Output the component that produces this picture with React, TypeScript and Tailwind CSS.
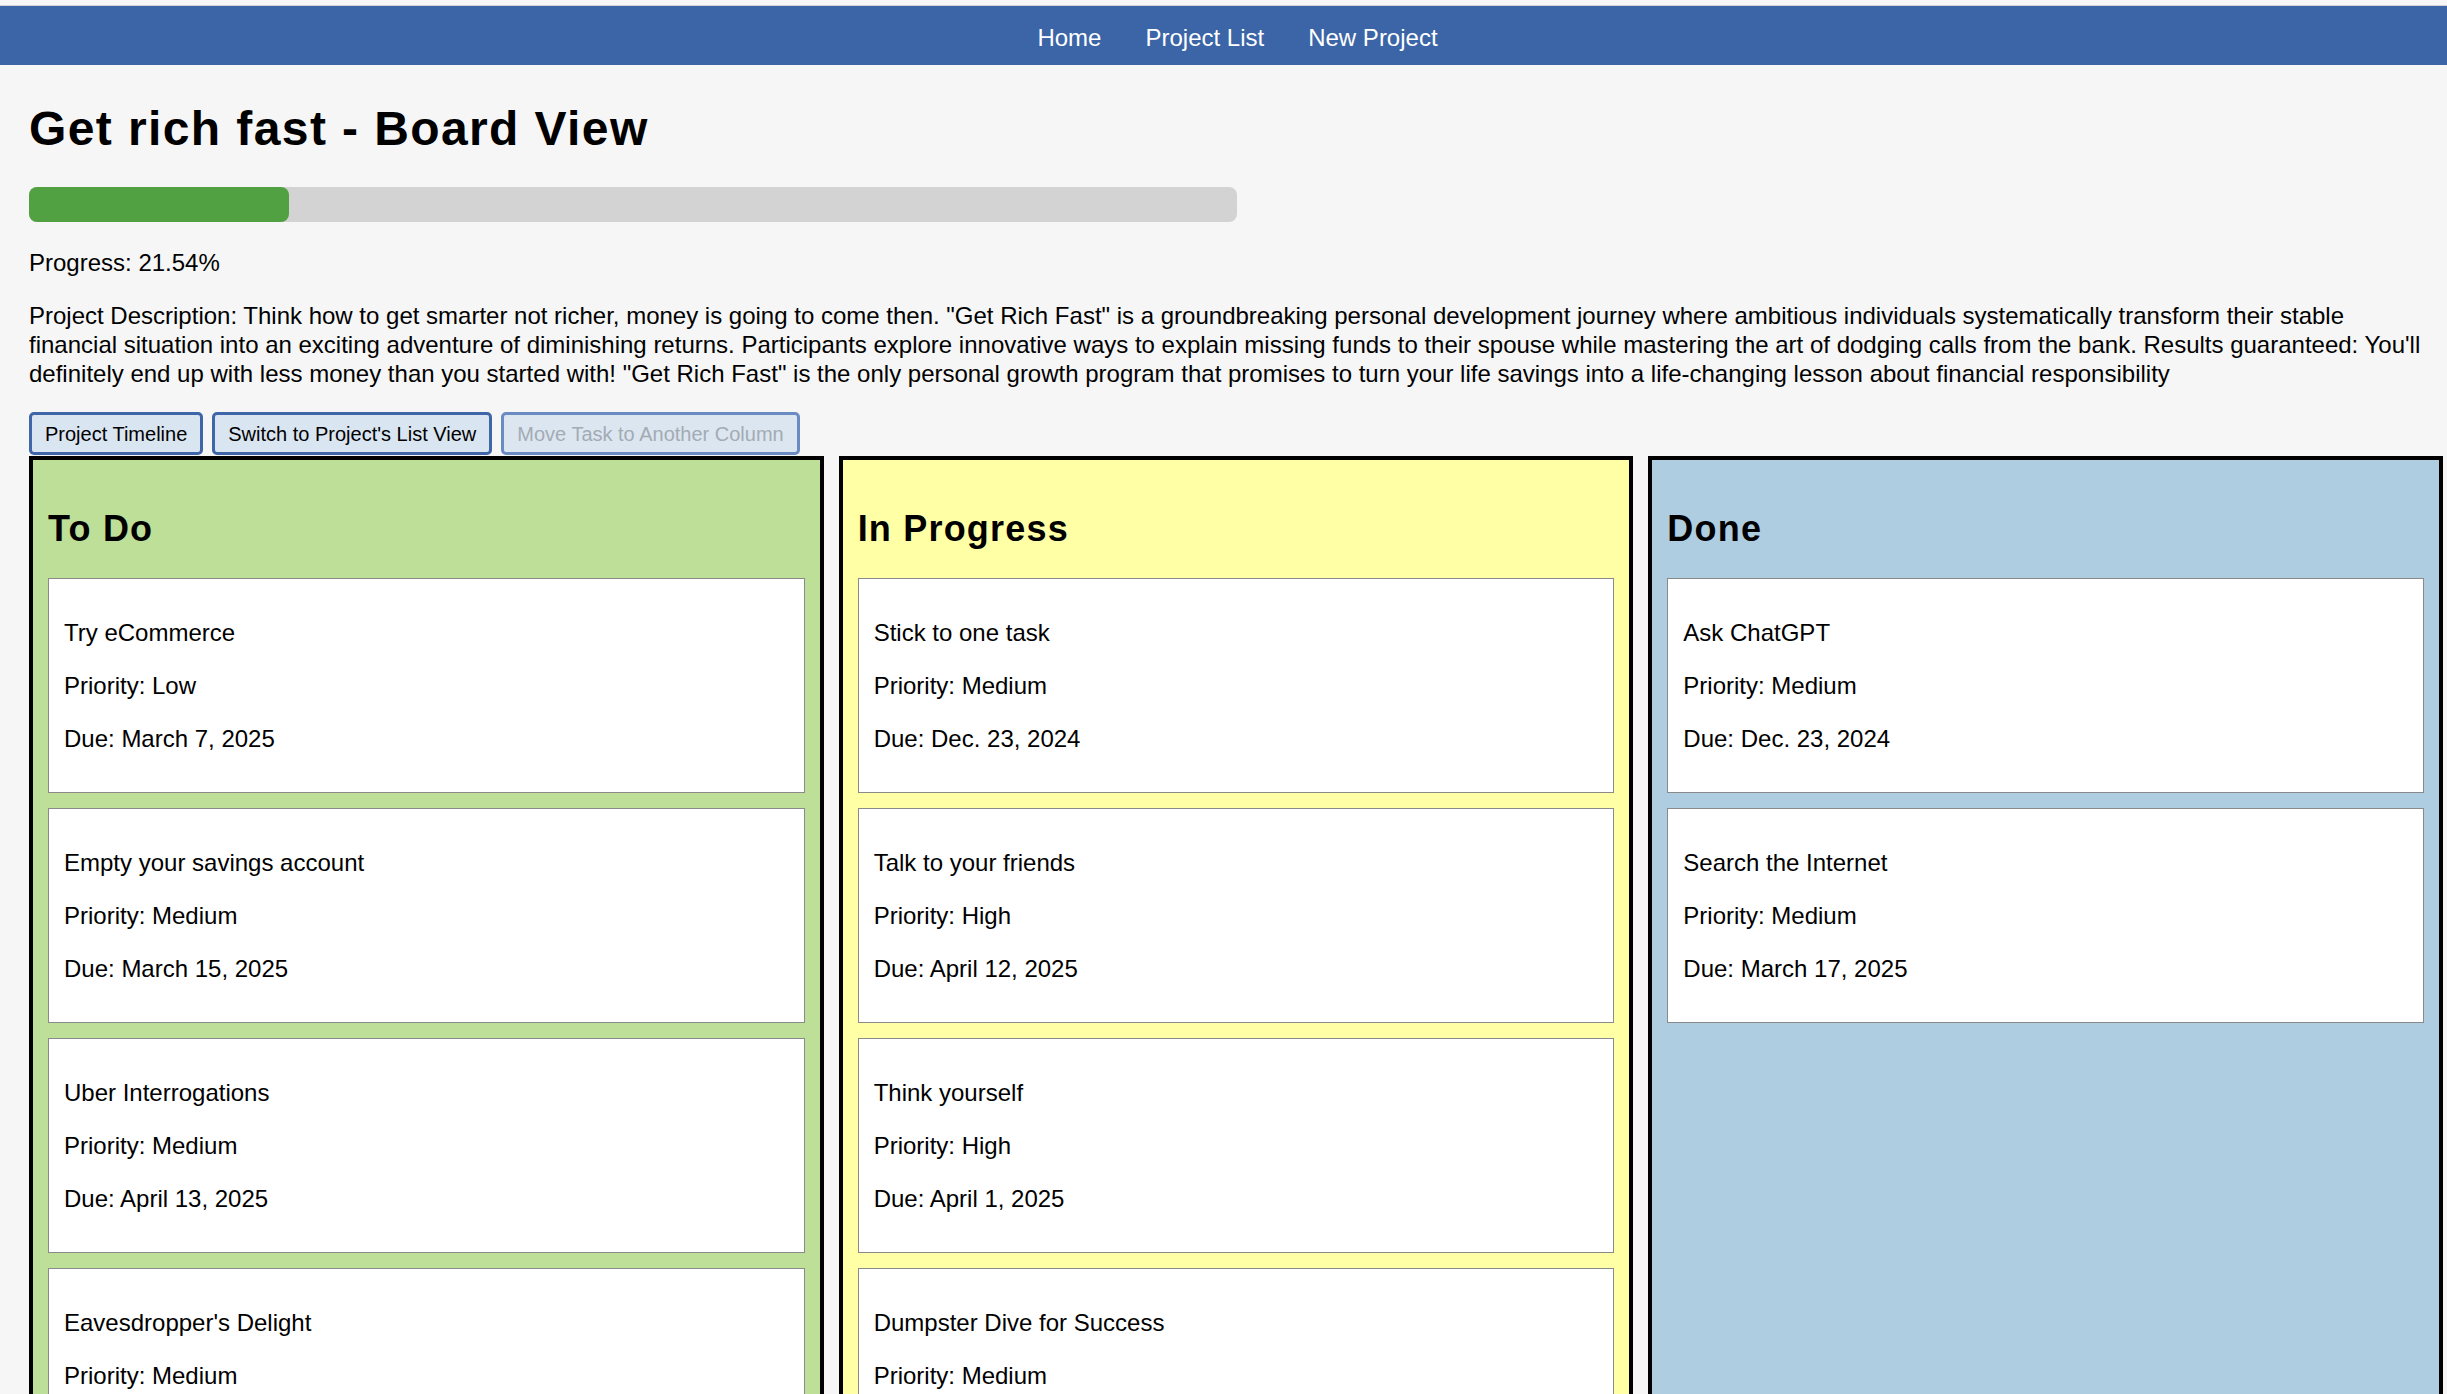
import React from 'react';

interface Task {
    id: number;
    title: string;
    priority: string;
    due: string;
}

interface Column {
    name: string;
    bg: string;
    tasks: Task[];
}

const description =
    'Project Description: Think how to get smarter not richer, money is going to come then. "Get Rich Fast" is a groundbreaking personal development journey where ambitious individuals systematically transform their stable financial situation into an exciting adventure of diminishing returns. Participants explore innovative ways to explain missing funds to their spouse while mastering the art of dodging calls from the bank. Results guaranteed: You\'ll definitely end up with less money than you started with! "Get Rich Fast" is the only personal growth program that promises to turn your life savings into a life-changing lesson about financial responsibility';

const columns: Column[] = [
    {
        name: 'To Do',
        bg: 'bg-[#bddf97]',
        tasks: [
            { id: 1, title: 'Try eCommerce', priority: 'Low', due: 'March 7, 2025' },
            { id: 2, title: 'Empty your savings account', priority: 'Medium', due: 'March 15, 2025' },
            { id: 3, title: 'Uber Interrogations', priority: 'Medium', due: 'April 13, 2025' },
            { id: 4, title: "Eavesdropper's Delight", priority: 'Medium', due: 'April 20, 2025' }
        ]
    },
    {
        name: 'In Progress',
        bg: 'bg-[#ffffa6]',
        tasks: [
            { id: 5, title: 'Stick to one task', priority: 'Medium', due: 'Dec. 23, 2024' },
            { id: 6, title: 'Talk to your friends', priority: 'High', due: 'April 12, 2025' },
            { id: 7, title: 'Think yourself', priority: 'High', due: 'April 1, 2025' },
            { id: 8, title: 'Dumpster Dive for Success', priority: 'Medium', due: 'April 5, 2025' }
        ]
    },
    {
        name: 'Done',
        bg: 'bg-[#aecde1]',
        tasks: [
            { id: 9, title: 'Ask ChatGPT', priority: 'Medium', due: 'Dec. 23, 2024' },
            { id: 10, title: 'Search the Internet', priority: 'Medium', due: 'March 17, 2025' }
        ]
    }
];

const progress = 21.54;

export default function App() {
    return (
        <div className="min-h-screen bg-[#f6f6f6] text-black font-['Liberation_Sans',Arial,sans-serif]">
            {/* Top edge */}
            <div className="h-[6px] border-b border-[#d4d4d4]" />

            {/* Navbar */}
            <nav className="h-[59px] bg-[#3b65a7] flex items-center justify-center pl-[28px] pt-[4px]">
                {['Home', 'Project List', 'New Project'].map((link) => (
                    <a key={link} href="#" className="px-[22px] text-[24px] text-white leading-[55px]">
                        {link}
                    </a>
                ))}
            </nav>

            <main className="pl-[29px] pr-[4px]">
                {/* Header */}
                <h1 className="mt-[36px] text-[48px] leading-[56px] font-bold tracking-[1.4px]">Get rich fast - Board View</h1>

                <div className="mt-[30px] w-[1208px] h-[35px] rounded-[8px] bg-[#d3d3d3]">
                    <div className="h-full rounded-[8px] bg-[#51a042]" style={{ width: `${progress}%` }} />
                </div>

                <p className="mt-[26px] text-[24px] leading-[29px]">Progress: {progress}%</p>

                <p className="mt-[24px] mr-[9px] text-[24px] leading-[29px]">{description}</p>

                {/* Actions */}
                <div className="mt-[24px] flex gap-[9px]">
                    <button className="h-[43px] px-[13px] text-[20px] bg-[#d9e5f1] border-[3px] border-[#3f66a6] rounded-[5px]">
                        Project Timeline
                    </button>
                    <button className="h-[43px] px-[13px] text-[20px] bg-[#d9e5f1] border-[3px] border-[#3f66a6] rounded-[5px]">
                        Switch to Project's List View
                    </button>
                    <button
                        disabled
                        className="h-[43px] px-[13px] text-[20px] text-[#a3abb3] bg-[#dbe6f1] border-[3px] border-[#6b8cc2] rounded-[5px]"
                    >
                        Move Task to Another Column
                    </button>
                </div>

                {/* Board */}
                <div className="mt-[1px] grid grid-cols-3 gap-[15px]">
                    {columns.map((col) => (
                        <div key={col.name} className={`${col.bg} border-[4px] border-black px-[15px] pt-[15px] pb-[15px]`}>
                            <h2 className="mt-[32px] mb-[27px] text-[36px] leading-[44px] font-bold tracking-[1.2px]">{col.name}</h2>
                            <div className="flex flex-col gap-[15px]">
                                {col.tasks.map((task) => (
                                    <div key={task.id} className="bg-white border border-[#8a8a8a] px-[15px] py-[39px] text-[24px] leading-[29px]">
                                        <p>{task.title}</p>
                                        <p className="mt-[24px]">Priority: {task.priority}</p>
                                        <p className="mt-[24px]">Due: {task.due}</p>
                                    </div>
                                ))}
                            </div>
                        </div>
                    ))}
                </div>
            </main>
        </div>
    );
}
